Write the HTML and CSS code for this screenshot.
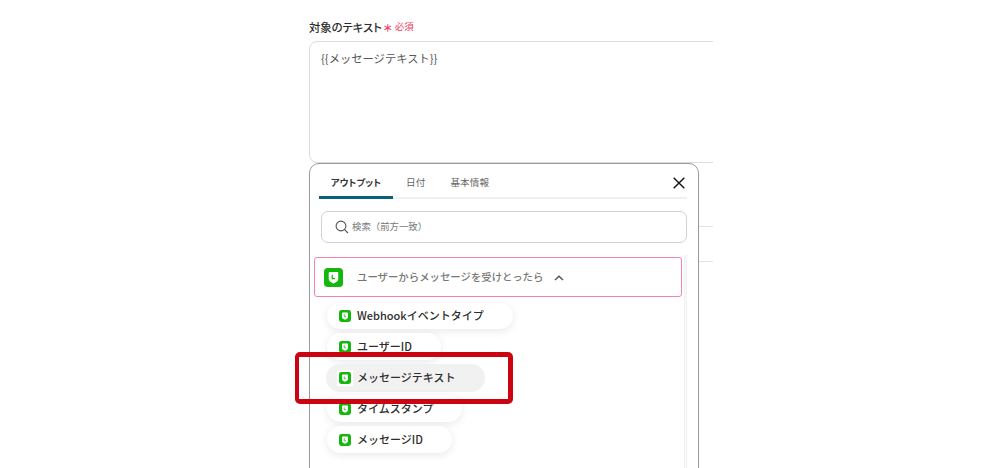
FILE: index.html
```html
<!DOCTYPE html>
<html lang="ja">
<head>
<meta charset="utf-8">
<title>対象のテキスト</title>
<link rel="stylesheet" href="styles.css">
</head>
<body>
<svg class="defs" width="0" height="0" aria-hidden="true">
  <symbol id="line" viewBox="0 0 20 20">
    <rect width="20" height="20" rx="4" fill="#14b80c"/>
    <path d="M5 5.2 C5 4.5 5.5 4.1 6.2 4.1 H13.8 C14.5 4.1 15 4.5 15 5.2 V11.5 C15 13.8 12.2 15.4 10 16.2 C7.8 15.4 5 13.8 5 11.5 Z" fill="#fff"/>
    <path d="M8.7 7.2 V11.2 H11.6" fill="none" stroke="#14b80c" stroke-width="1.3"/>
  </symbol>
</svg>
<main class="stage">
  <section class="form">
    <div class="label-row">
      <span class="label">対象のテキスト</span>
      <span class="star">＊</span>
      <span class="required">必須</span>
    </div>
    <div class="textarea">{{メッセージテキスト}}</div>
    <div class="behind behind-a"></div>
    <div class="behind behind-b"></div>
  </section>

  <section class="popup">
    <header class="tabs">
      <span class="tab tab-active">アウトプット</span>
      <span class="tab tab-date">日付</span>
      <span class="tab tab-info">基本情報</span>
      <svg class="close" viewBox="0 0 12 12" aria-label="閉じる"><path d="M.7.7 11.3 11.3M11.3.7.7 11.3" stroke="#111" stroke-width="1.4" fill="none"/></svg>
    </header>
    <div class="search">
      <svg class="search-icon" viewBox="0 0 14 14"><circle cx="6" cy="6" r="4.9" fill="none" stroke="#555" stroke-width="1.1"/><path d="M9.6 9.6 13 13" stroke="#555" stroke-width="1.1"/></svg>
      <span class="search-text">検索（前方一致）</span>
    </div>
    <div class="body">
      <div class="list">
        <div class="trigger">
          <svg class="trigger-icon"><use href="#line"/></svg>
          <span class="trigger-text">ユーザーからメッセージを受けとったら</span>
          <svg class="chevron" viewBox="0 0 10 6"><path d="M1 5 5 1.2 9 5" fill="none" stroke="#555" stroke-width="1.5"/></svg>
        </div>
        <div class="pills">
          <div class="pill pill-webhook"><svg class="pill-icon"><use href="#line"/></svg><span class="pill-label">Webhookイベントタイプ</span></div>
          <div class="pill pill-user"><svg class="pill-icon"><use href="#line"/></svg><span class="pill-label">ユーザーID</span></div>
          <div class="pill pill-text"><svg class="pill-icon"><use href="#line"/></svg><span class="pill-label">メッセージテキスト</span></div>
          <div class="pill pill-time"><svg class="pill-icon"><use href="#line"/></svg><span class="pill-label">タイムスタンプ</span></div>
          <div class="pill pill-id"><svg class="pill-icon"><use href="#line"/></svg><span class="pill-label">メッセージID</span></div>
        </div>
      </div>
      <div class="scrollbar"></div>
    </div>
  </section>

  <div class="highlight"></div>
</main>
</body>
</html>
```

FILE: styles.css
```css
* { box-sizing: border-box; }
html, body { margin: 0; height: 100%; background: #fff; overflow: hidden; }
body { font-family: "Noto Sans CJK JP", "Noto Sans", sans-serif; color: #333; }
.defs { position: absolute; }

.stage { position: relative; width: 1000px; height: 468px; overflow: hidden; padding-left: 309px; }

.form { width: 404px; height: 468px; overflow: hidden; padding-top: 18px; }
.label-row { display: flex; align-items: center; height: 17px; margin-bottom: 6px; }
.label { font-size: 11.3px; font-weight: 500; color: #2b2b2b; font-feature-settings: "palt"; }
.star { color: #f0405f; font-size: 10px; font-weight: 700; line-height: 17px; margin-left: 1px; padding-top: 2px; }
.required { color: #f0405f; font-size: 9.5px; margin-left: 2px; margin-top: -2px; }
.textarea { width: 440px; height: 122px; border: 1px solid #d9dce2; border-radius: 8px; padding: 7px 11px; font-size: 11.3px; line-height: 18px; color: #555; }
.behind { width: 440px; border-top: 1px solid #dfe3ea; }
.behind-a { margin-top: 63px; }
.behind-b { margin-top: 34px; }

.popup { position: absolute; left: 309px; top: 163px; width: 390px; height: 330px; background: #fff; border: 1px solid #9a9a9a; border-radius: 10px; padding: 0 11px 0 9px; }
.tabs { position: relative; display: flex; height: 35px; border-bottom: 2px solid #eef0f3; }
.tab { font-size: 9.6px; line-height: 36px; color: #666; letter-spacing: .1px; }
.tab-active { width: 74px; text-align: center; font-size: 9.3px; font-weight: 700; color: #333; border-bottom: 3px solid #0b6079; border-radius: 3px 3px 0 0; height: 35px; flex: none; font-feature-settings: "palt"; }
.tab-date { margin-left: 13px; }
.tab-info { margin-left: 25px; }
.close { position: absolute; right: 2px; top: 13px; width: 12px; height: 12px; }

.search { display: flex; align-items: center; height: 32px; margin: 12px 0 0 2px; width: 366px; border: 1px solid #ced1d6; border-radius: 7px; padding-left: 13px; font-size: 9.4px; color: #777; gap: 3px; }
.search-icon { width: 14px; height: 14px; flex: none; }
.search-text { margin-top: -2px; }

.body { display: flex; margin-top: 12px; margin-left: -5px; }
.list { width: 368px; flex: none; padding-top: 2px; }
.scrollbar { width: 12px; height: 240px; margin-left: 2px; background: #fafafa; border-left: 1px solid #f1f1f1; border-right: 1px solid #f1f1f1; }

.trigger { display: flex; align-items: center; height: 40px; border: 1.5px solid #f184b4; border-radius: 3px; padding-left: 9px; }
.trigger-icon { width: 19px; height: 19px; flex: none; }
.trigger-text { margin-left: 14px; font-size: 10.4px; font-weight: 500; color: #777; margin-top: -2px; }
.chevron { width: 10px; height: 6px; margin-left: 11px; margin-top: 1px; }

.pills { display: flex; flex-direction: column; gap: 4px; padding: 6px 0 0 13px; align-items: flex-start; }
.pill { position: relative; display: flex; align-items: center; height: 27px; border-radius: 14px; background: #fff; box-shadow: 0 2px 8px rgba(0,0,0,.09); padding-left: 12px; font-size: 11px; font-weight: 500; color: #2d2d2d; }
.pill-icon { width: 12px; height: 12px; margin-right: 6px; flex: none; }
.pill-label { margin-top: -2px; }
.pill-webhook { width: 186px; height: 26px; }
.pill-user { width: 114px; }
.pill-text { width: 159px; height: 28px; background: #f1f1f1; box-shadow: none; margin-left: -1px; padding-left: 13px; }
.pill-text .pill-icon { box-shadow: 0 0 0 2px #fff; }
.pill-time { width: 135px; margin-top: -1px; }
.pill-id { width: 125px; }

.highlight { position: absolute; left: 295px; top: 352px; width: 218px; height: 52px; border-style: solid; border-color: #cc0412; border-width: 5px 5px 5px 4px; border-radius: 5px; }
```
